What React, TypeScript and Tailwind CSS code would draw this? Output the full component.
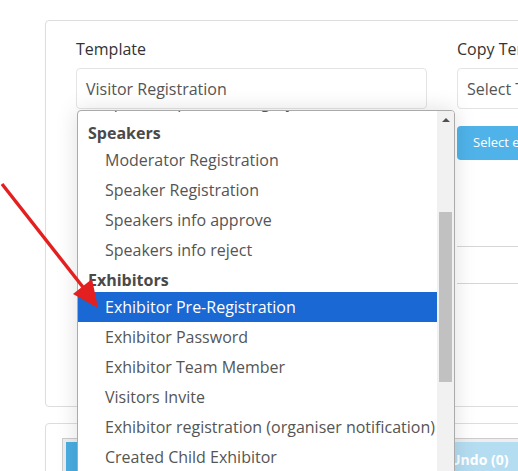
import React from 'react';

type Row = { label: string; group?: boolean; active?: boolean; clipped?: boolean };

const ROWS: Row[] = [
  { label: 'Speakers profile category', clipped: true },
  { label: 'Speakers', group: true },
  { label: 'Moderator Registration' },
  { label: 'Speaker Registration' },
  { label: 'Speakers info approve' },
  { label: 'Speakers info reject' },
  { label: 'Exhibitors', group: true },
  { label: 'Exhibitor Pre-Registration', active: true },
  { label: 'Exhibitor Password' },
  { label: 'Exhibitor Team Member' },
  { label: 'Visitors Invite' },
  { label: 'Exhibitor registration (organiser notification)' },
  { label: 'Created Child Exhibitor' },
  { label: 'Exhibitor Badge' },
];

const rowClass = (row: Row) => {
  if (row.group) return 'pl-[10px] pt-[6px] pb-[3px] leading-[18px] font-bold text-[#4a4a4a]';
  if (row.active) return 'whitespace-nowrap bg-[#1a68d3] py-[6px] pl-[27px] leading-[18px] text-white';
  if (row.clipped) return 'whitespace-nowrap pt-[5px] pb-[7px] pl-[27px] leading-[18px] text-[#555]';
  return 'whitespace-nowrap py-[6px] pl-[27px] leading-[18px] text-[#555]';
};

const Dropdown = () => {
  return (
    <div className="absolute left-[77px] top-[110px] z-10 h-[400px] w-[378px] overflow-hidden rounded-t-[4px] border border-[#aaa] bg-white shadow-[0_0_22px_rgba(0,0,0,0.13)]">
      <ul className="-mt-[23px] mr-[17px]">
        {ROWS.map((row) => (
          <li key={row.label} className={rowClass(row)}>
            {row.label}
          </li>
        ))}
      </ul>
      {/* scrollbar */}
      <div className="absolute right-0 top-0 bottom-0 w-[17px] bg-[#f1f1f1]">
        <div className="mx-auto mt-[7px] h-0 w-0 border-x-[4px] border-b-[4px] border-x-transparent border-b-[#505050]" />
        <div className="absolute left-[2px] top-[101px] h-[170px] w-[13px] bg-[#c1c1c1]" />
      </div>
    </div>
  );
};

const Arrow = () => (
  <svg className="pointer-events-none absolute left-0 top-0 z-20" width="518" height="471">
    <line x1="2" y1="184" x2="86" y2="291" stroke="#e3201f" strokeWidth="3.4" />
    <polygon points="98,308 73,294 92,279" fill="#e3201f" />
  </svg>
);

export default function App() {
  return (
    <div className="relative h-[471px] w-[518px] overflow-hidden bg-white pl-[45px] pt-[20px] font-['Open_Sans',sans-serif] text-[16px]">
      {/* card 1 */}
      <div className="h-[387px] w-[820px] rounded-[4px] border border-[#ddd] bg-white pl-[30px] pt-[17px]">
        <div className="flex gap-[30px]">
          <div className="w-[351px] shrink-0">
            <label className="mb-[8px] block leading-[22px] text-[#333]">Template</label>
            <div className="flex h-[41px] items-center rounded-[4px] border border-[#e4e4e4] px-[9px] text-[#555]">
              Visitor Registration
            </div>
            <div className="ml-[1px] mt-[14px] h-[6px] w-[2px] bg-[#c89a6e]" />
            <div className="ml-[1px] mt-[216px] h-[14px] w-[2px] bg-[#9fb8d8]" />
            <div className="ml-[1px] mt-[21px] h-[14px] w-[2px] bg-[#9fb8d8]" />
          </div>
          <div className="w-[351px] shrink-0">
            <label className="mb-[8px] block leading-[22px] text-[#333]">Copy Template</label>
            <div className="flex h-[41px] items-center rounded-[4px] border border-[#e4e4e4] px-[9px] text-[#555]">
              Select Template
            </div>
            <button className="mt-[17px] flex h-[34px] items-center rounded-[4px] bg-[#4fb3ea] px-[16px] text-[13px] text-white">
              Select email template
            </button>
            <div className="mt-[86px] h-[38px] border-y border-[#d6d6d6]" />
          </div>
        </div>
      </div>

      {/* card 2 */}
      <div className="mt-[16px] h-[100px] w-[820px] rounded-[4px] border border-[#ddd] bg-white pl-[16px] pt-[14px]">
        <div className="flex w-[700px] border border-[#ccc] bg-[#eee] p-[3px]">
          <button className="h-[34px] w-[180px] bg-[#4aaee3] text-[14px] font-bold text-white">Save</button>
          <button className="ml-px h-[34px] w-[180px] bg-[#4aaee3] text-[14px] font-bold text-white">Preview</button>
          <button className="ml-[11px] h-[34px] bg-[#b5ddf2] px-[12px] text-[14px] font-bold text-white">Undo (0)</button>
        </div>
      </div>

      <Dropdown />
      <Arrow />
    </div>
  );
}
